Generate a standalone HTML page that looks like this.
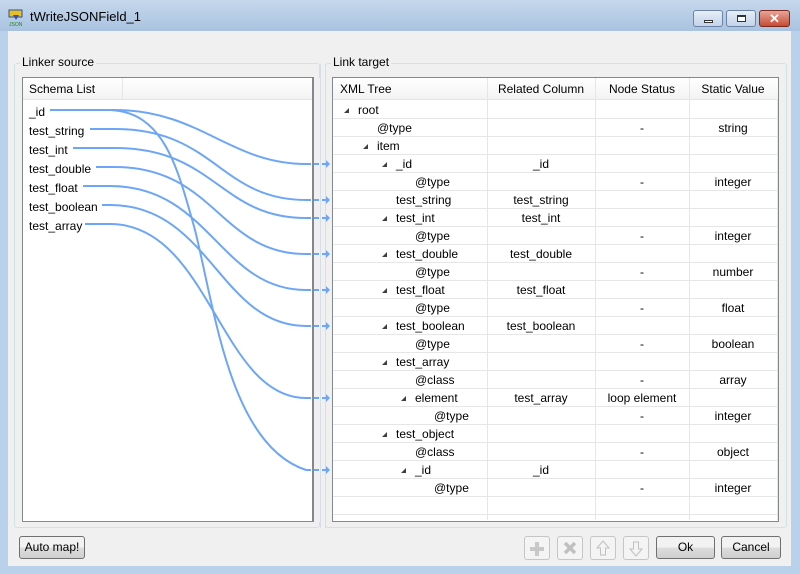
<!DOCTYPE html>
<html><head><style>
*{margin:0;padding:0;box-sizing:border-box}
body{width:800px;height:574px;position:relative;overflow:hidden;background:#b9d1ea;font-family:"Liberation Sans",sans-serif;font-size:12px;color:#000}
.abs{position:absolute}
#title{left:0;top:0;width:800px;height:31px;background:linear-gradient(#c5d8ec,#a9c3e0)}
#body{left:8px;top:31px;width:783px;height:535px;background:#f0f0f0}
.gb{border:1px solid #d5dfe5;border-radius:3px}
.lbl{background:#f0f0f0;padding:0 2px;}
.tbox{background:#fff;border:1px solid #828790}
.hdr{background:linear-gradient(#fff,#f3f3f3);border-bottom:1px solid #e5e5e5;height:22px}
.btn{border:1px solid #707070;border-radius:3px;background:linear-gradient(#f2f2f2 50%,#dddddd 50%,#cfcfcf);text-align:center;line-height:20px}
.ib{border:1px solid #c6c6c6;border-radius:3px;background:#f4f4f4;width:26px;height:24px;top:536px}
.c{position:absolute;text-align:center;white-space:nowrap}
</style></head><body>
<div id="title" class="abs"></div>
<svg class="abs" style="left:8px;top:9px" width="16" height="18"><rect x="1" y="1" width="13" height="7" fill="#e8c020" stroke="#3050a0"/><path d="M5 6 L11 6 L8 11Z" fill="#3050c0"/><text x="1" y="17" font-size="5" fill="#208020" font-family="Liberation Sans">JSON</text></svg>
<div class="abs" style="left:30px;top:9px;font-size:13px">tWriteJSONField_1</div>
<div class="abs" style="left:693px;top:10px;width:30px;height:17px;border:1px solid #6d83a3;border-radius:3px;background:linear-gradient(#e6eef8,#c3d3e8)"><div class="abs" style="left:10px;top:9px;width:9px;height:3px;border:1px solid #333;background:#fff"></div></div>
<div class="abs" style="left:726px;top:10px;width:30px;height:17px;border:1px solid #6d83a3;border-radius:3px;background:linear-gradient(#e6eef8,#c3d3e8)"><div class="abs" style="left:10px;top:4px;width:9px;height:7px;border:1px solid #333;border-top-width:2px;background:#fff"></div></div>
<div class="abs" style="left:759px;top:10px;width:31px;height:17px;border:1px solid #7a2a1e;border-radius:3px;background:linear-gradient(#e8a598,#c74b33);color:#fff;font-weight:bold;text-align:center;line-height:15px;font-size:13px">✕</div>
<div id="body" class="abs"></div>

<div class="abs gb" style="left:14px;top:63px;width:306px;height:465px"></div>
<div class="abs lbl" style="left:20px;top:55px">Linker source</div>
<div class="abs tbox" style="left:22px;top:77px;width:291px;height:445px"></div>
<div class="abs hdr" style="left:23px;top:78px;width:289px"></div>
<div class="abs" style="left:122px;top:78px;width:1px;height:22px;background:#e5e5e5"></div>
<div class="abs" style="left:29px;top:82px">Schema List</div>
<div class="abs" style="left:29px;top:103px;line-height:19px">_id<br>test_string<br>test_int<br>test_double<br>test_float<br>test_boolean<br>test_array</div>

<div class="abs gb" style="left:325px;top:63px;width:462px;height:465px"></div>
<div class="abs lbl" style="left:331px;top:55px">Link target</div>
<div class="abs tbox" style="left:332px;top:77px;width:447px;height:445px"></div>
<div class="abs hdr" style="left:333px;top:78px;width:445px"></div>
<div class="abs" style="left:340px;top:82px">XML Tree</div>
<div class="c" style="left:487px;width:108px;top:82px">Related Column</div>
<div class="c" style="left:595px;width:94px;top:82px">Node Status</div>
<div class="c" style="left:689px;width:88px;top:82px">Static Value</div>

<svg class="abs" style="left:0;top:0" width="800" height="574">
<g stroke="#e6e6e6" stroke-width="1">
<line x1="487.5" y1="78" x2="487.5" y2="520"/><line x1="595.5" y1="78" x2="595.5" y2="520"/><line x1="689.5" y1="78" x2="689.5" y2="520"/><line x1="777.5" y1="100" x2="777.5" y2="520"/>
<line x1="333" y1="118.5" x2="778" y2="118.5"/><line x1="333" y1="136.5" x2="778" y2="136.5"/><line x1="333" y1="154.5" x2="778" y2="154.5"/><line x1="333" y1="172.5" x2="778" y2="172.5"/><line x1="333" y1="190.5" x2="778" y2="190.5"/><line x1="333" y1="208.5" x2="778" y2="208.5"/><line x1="333" y1="226.5" x2="778" y2="226.5"/><line x1="333" y1="244.5" x2="778" y2="244.5"/><line x1="333" y1="262.5" x2="778" y2="262.5"/><line x1="333" y1="280.5" x2="778" y2="280.5"/><line x1="333" y1="298.5" x2="778" y2="298.5"/><line x1="333" y1="316.5" x2="778" y2="316.5"/><line x1="333" y1="334.5" x2="778" y2="334.5"/><line x1="333" y1="352.5" x2="778" y2="352.5"/><line x1="333" y1="370.5" x2="778" y2="370.5"/><line x1="333" y1="388.5" x2="778" y2="388.5"/><line x1="333" y1="406.5" x2="778" y2="406.5"/><line x1="333" y1="424.5" x2="778" y2="424.5"/><line x1="333" y1="442.5" x2="778" y2="442.5"/><line x1="333" y1="460.5" x2="778" y2="460.5"/><line x1="333" y1="478.5" x2="778" y2="478.5"/><line x1="333" y1="496.5" x2="778" y2="496.5"/><line x1="333" y1="514.5" x2="778" y2="514.5"/>
</g>
<g fill="#404040">
<path d="M344 113 L349 108 L349 113Z"/><path d="M363 149 L368 144 L368 149Z"/><path d="M382 167 L387 162 L387 167Z"/><path d="M382 221 L387 216 L387 221Z"/><path d="M382 257 L387 252 L387 257Z"/><path d="M382 293 L387 288 L387 293Z"/><path d="M382 329 L387 324 L387 329Z"/><path d="M382 365 L387 360 L387 365Z"/><path d="M401 401 L406 396 L406 401Z"/><path d="M382 437 L387 432 L387 437Z"/><path d="M401 473 L406 468 L406 473Z"/>
</g>
<rect x="313" y="78" width="12" height="444" fill="#f0f0f0"/>
<line x1="313.5" y1="77" x2="313.5" y2="522" stroke="#828790"/>
<line x1="320.5" y1="64" x2="320.5" y2="528" stroke="#d5dfe5"/>
<line x1="325.5" y1="64" x2="325.5" y2="528" stroke="#d5dfe5"/>
<line x1="332.5" y1="77" x2="332.5" y2="522" stroke="#828790"/>
<g stroke="#6ea6f7" stroke-width="2" fill="none">
<path d="M50 110 L115 110 C200 110 230 164 306 164"/>
<path d="M90 129 L115 129 C215 129 220 200 306 200"/>
<path d="M73 148 L115 148 C215 148 220 218 306 218"/>
<path d="M96 167 L115 167 C215 167 220 254 306 254"/>
<path d="M83 186 L110 186 C210 186 220 290 306 290"/>
<path d="M102 205 L110 205 C210 205 220 326 306 326"/>
<path d="M85 224 L110 224 C210 224 220 398 306 398"/>
<path d="M110 110 C165 112 178 170 195 230 C215 310 230 445 306 470"/>
</g>
<g stroke="#6ea6f7" stroke-width="2" stroke-dasharray="5,3">
<line x1="306" y1="164" x2="326" y2="164"/><line x1="306" y1="200" x2="326" y2="200"/><line x1="306" y1="218" x2="326" y2="218"/><line x1="306" y1="254" x2="326" y2="254"/><line x1="306" y1="290" x2="326" y2="290"/><line x1="306" y1="326" x2="326" y2="326"/><line x1="306" y1="398" x2="326" y2="398"/><line x1="306" y1="470" x2="326" y2="470"/>
</g>
<g fill="#6ea6f7"><path d="M326 160 L330 164 L326 168Z"/><path d="M326 196 L330 200 L326 204Z"/><path d="M326 214 L330 218 L326 222Z"/><path d="M326 250 L330 254 L326 258Z"/><path d="M326 286 L330 290 L326 294Z"/><path d="M326 322 L330 326 L326 330Z"/><path d="M326 394 L330 398 L326 402Z"/><path d="M326 466 L330 470 L326 474Z"/></g>
</svg>

<div class="abs" style="left:358px;top:103px">root</div>
<div class="abs" style="left:377px;top:121px">@type</div>
<div class="abs" style="left:377px;top:139px">item</div>
<div class="abs" style="left:396px;top:157px">_id</div>
<div class="abs" style="left:415px;top:175px">@type</div>
<div class="abs" style="left:396px;top:193px">test_string</div>
<div class="abs" style="left:396px;top:211px">test_int</div>
<div class="abs" style="left:415px;top:229px">@type</div>
<div class="abs" style="left:396px;top:247px">test_double</div>
<div class="abs" style="left:415px;top:265px">@type</div>
<div class="abs" style="left:396px;top:283px">test_float</div>
<div class="abs" style="left:415px;top:301px">@type</div>
<div class="abs" style="left:396px;top:319px">test_boolean</div>
<div class="abs" style="left:415px;top:337px">@type</div>
<div class="abs" style="left:396px;top:355px">test_array</div>
<div class="abs" style="left:415px;top:373px">@class</div>
<div class="abs" style="left:415px;top:391px">element</div>
<div class="abs" style="left:434px;top:409px">@type</div>
<div class="abs" style="left:396px;top:427px">test_object</div>
<div class="abs" style="left:415px;top:445px">@class</div>
<div class="abs" style="left:415px;top:463px">_id</div>
<div class="abs" style="left:434px;top:481px">@type</div>

<div class="c" style="left:487px;width:108px;top:157px">_id</div>
<div class="c" style="left:487px;width:108px;top:193px">test_string</div>
<div class="c" style="left:487px;width:108px;top:211px">test_int</div>
<div class="c" style="left:487px;width:108px;top:247px">test_double</div>
<div class="c" style="left:487px;width:108px;top:283px">test_float</div>
<div class="c" style="left:487px;width:108px;top:319px">test_boolean</div>
<div class="c" style="left:487px;width:108px;top:391px">test_array</div>
<div class="c" style="left:487px;width:108px;top:463px">_id</div>

<div class="c" style="left:595px;width:94px;top:121px">-</div>
<div class="c" style="left:595px;width:94px;top:175px">-</div>
<div class="c" style="left:595px;width:94px;top:229px">-</div>
<div class="c" style="left:595px;width:94px;top:265px">-</div>
<div class="c" style="left:595px;width:94px;top:301px">-</div>
<div class="c" style="left:595px;width:94px;top:337px">-</div>
<div class="c" style="left:595px;width:94px;top:373px">-</div>
<div class="c" style="left:595px;width:94px;top:391px">loop element</div>
<div class="c" style="left:595px;width:94px;top:409px">-</div>
<div class="c" style="left:595px;width:94px;top:445px">-</div>
<div class="c" style="left:595px;width:94px;top:481px">-</div>

<div class="c" style="left:689px;width:88px;top:121px">string</div>
<div class="c" style="left:689px;width:88px;top:175px">integer</div>
<div class="c" style="left:689px;width:88px;top:229px">integer</div>
<div class="c" style="left:689px;width:88px;top:265px">number</div>
<div class="c" style="left:689px;width:88px;top:301px">float</div>
<div class="c" style="left:689px;width:88px;top:337px">boolean</div>
<div class="c" style="left:689px;width:88px;top:373px">array</div>
<div class="c" style="left:689px;width:88px;top:409px">integer</div>
<div class="c" style="left:689px;width:88px;top:445px">object</div>
<div class="c" style="left:689px;width:88px;top:481px">integer</div>

<div class="abs btn" style="left:19px;top:536px;width:66px;height:23px">Auto map!</div>
<div class="abs ib" style="left:524px"><svg width="24" height="22"><path d="M10 5h4v5h5v4h-5v5h-4v-5h-5v-4h5z" fill="#c8c8c8"/></svg></div>
<div class="abs ib" style="left:557px"><svg width="24" height="22"><path d="M7 6l10 10M17 6l-10 10" stroke="#c0c0c0" stroke-width="3.5"/></svg></div>
<div class="abs ib" style="left:590px"><svg width="24" height="22"><path d="M12 4l6 7h-3.5v7h-5v-7h-3.5z" fill="none" stroke="#c0c0c0"/></svg></div>
<div class="abs ib" style="left:623px"><svg width="24" height="22"><path d="M12 19l6-7h-3.5v-7h-5v7h-3.5z" fill="none" stroke="#c0c0c0"/></svg></div>
<div class="abs btn" style="left:656px;top:536px;width:59px;height:23px">Ok</div>
<div class="abs btn" style="left:721px;top:536px;width:60px;height:23px">Cancel</div>
</body></html>
